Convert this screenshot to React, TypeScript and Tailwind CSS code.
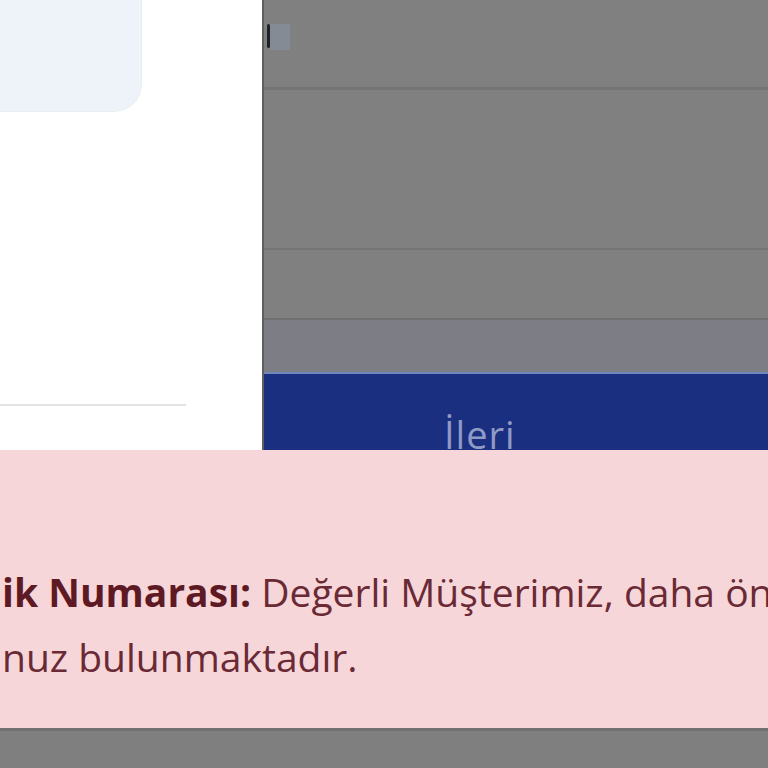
import React from 'react';

const App: React.FC = () => {
  return (
    <div className="w-[768px] h-[768px] overflow-hidden flex flex-col bg-[#7f7f7f] font-['Open_Sans',sans-serif]">
      <div className="flex h-[450px] shrink-0">
        {/* left card */}
        <div className="w-[262px] bg-white flex flex-col">
          <div className="w-[142px] h-[112px] bg-[#eef2f9] rounded-br-[28px] border-r border-b border-[#e8edf4]" />
          <div className="mt-[292px] h-[2px] w-[186px] bg-[#e3e3e3]" />
        </div>

        {/* right form area under overlay */}
        <div className="flex-1 flex flex-col border-l-2 border-[#5f5f5f]">
          <div className="h-[372px] flex flex-col bg-[#808080]">
            <div className="h-[90px] border-b-[3px] border-[#747474] flex items-start pt-[24px] pl-[3px]">
              <div className="w-[3px] h-[24px] bg-[#1f2226] rounded-sm" />
              <div className="w-[20px] h-[26px] bg-[#8793a3] opacity-60" />
            </div>
            <div className="h-[160px] border-b-2 border-[#747474]" />
            <div className="h-[70px] border-b-2 border-[#707070]" />
            <div className="flex-1 bg-[#7d7e85]" />
          </div>
          <div className="flex-1 bg-[#1b2f80] border-t-2 border-[#6f86bd] overflow-hidden flex justify-start pl-[180px] pt-[36px]">
            <span className="text-[38px] leading-[48px] tracking-[1px] text-[#8f9bc6]">İleri</span>
          </div>
        </div>
      </div>

      {/* alert */}
      <div className="h-[278px] shrink-0 bg-[#f7d6d9] overflow-hidden pt-[109px] pl-[2px]">
        <p className="text-[39px] leading-[65px] text-[#6a2a35] whitespace-nowrap">
          <strong className="font-bold text-[#5e1a24]">ik Numarası:</strong> Değerli Müşterimiz, daha önce
        </p>
        <p className="text-[39px] leading-[65px] text-[#6a2a35] whitespace-nowrap">nuz bulunmaktadır.</p>
      </div>

      <div className="flex-1 bg-[#7f7f7f] border-t-[3px] border-[#727070]" />
    </div>
  );
};

export default App;
